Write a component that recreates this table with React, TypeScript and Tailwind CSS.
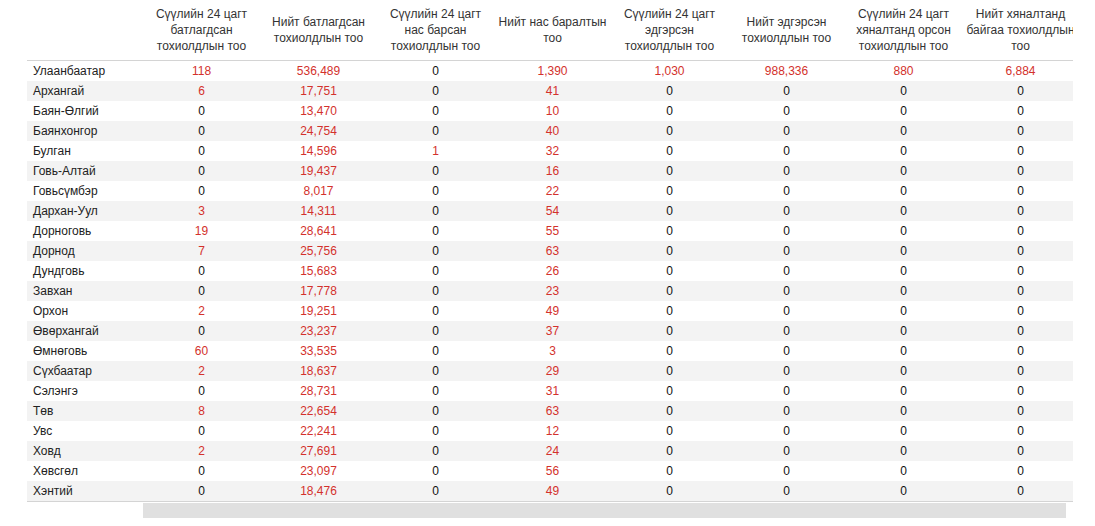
import React from "react";

const headers = [
  "Сүүлийн 24 цагт батлагдсан тохиолдлын тоо",
  "Нийт батлагдсан тохиолдлын тоо",
  "Сүүлийн 24 цагт нас барсан тохиолдлын тоо",
  "Нийт нас баралтын тоо",
  "Сүүлийн 24 цагт эдгэрсэн тохиолдлын тоо",
  "Нийт эдгэрсэн тохиолдлын тоо",
  "Сүүлийн 24 цагт хяналтанд орсон тохиолдлын тоо",
  "Нийт хяналтанд байгаа тохиолдлын тоо",
];

const rows: [string, string[]][] = [
  ["Улаанбаатар", ["118", "536,489", "0", "1,390", "1,030", "988,336", "880", "6,884"]],
  ["Архангай", ["6", "17,751", "0", "41", "0", "0", "0", "0"]],
  ["Баян-Өлгий", ["0", "13,470", "0", "10", "0", "0", "0", "0"]],
  ["Баянхонгор", ["0", "24,754", "0", "40", "0", "0", "0", "0"]],
  ["Булган", ["0", "14,596", "1", "32", "0", "0", "0", "0"]],
  ["Говь-Алтай", ["0", "19,437", "0", "16", "0", "0", "0", "0"]],
  ["Говьсүмбэр", ["0", "8,017", "0", "22", "0", "0", "0", "0"]],
  ["Дархан-Уул", ["3", "14,311", "0", "54", "0", "0", "0", "0"]],
  ["Дорноговь", ["19", "28,641", "0", "55", "0", "0", "0", "0"]],
  ["Дорнод", ["7", "25,756", "0", "63", "0", "0", "0", "0"]],
  ["Дундговь", ["0", "15,683", "0", "26", "0", "0", "0", "0"]],
  ["Завхан", ["0", "17,778", "0", "23", "0", "0", "0", "0"]],
  ["Орхон", ["2", "19,251", "0", "49", "0", "0", "0", "0"]],
  ["Өвөрхангай", ["0", "23,237", "0", "37", "0", "0", "0", "0"]],
  ["Өмнөговь", ["60", "33,535", "0", "3", "0", "0", "0", "0"]],
  ["Сүхбаатар", ["2", "18,637", "0", "29", "0", "0", "0", "0"]],
  ["Сэлэнгэ", ["0", "28,731", "0", "31", "0", "0", "0", "0"]],
  ["Төв", ["8", "22,654", "0", "63", "0", "0", "0", "0"]],
  ["Увс", ["0", "22,241", "0", "12", "0", "0", "0", "0"]],
  ["Ховд", ["2", "27,691", "0", "24", "0", "0", "0", "0"]],
  ["Хөвсгөл", ["0", "23,097", "0", "56", "0", "0", "0", "0"]],
  ["Хэнтий", ["0", "18,476", "0", "49", "0", "0", "0", "0"]],
];

export default function App() {
  return (
    <div
      className="w-[1095px] h-[526px] bg-white overflow-hidden"
      style={{ fontFamily: '"Liberation Sans", Arial, sans-serif' }}
    >
      <div className="ml-[27px] w-[1046px] overflow-hidden">
        <table className="table-fixed border-collapse w-[1052px] text-[12px]">
          <colgroup>
            <col className="w-[116px]" />
            {headers.map((_, i) => (
              <col key={i} className="w-[117px]" />
            ))}
          </colgroup>
          <thead>
            <tr className="border-b border-[#d4d4d4]">
              <th className="h-[60px]"></th>
              {headers.map((h, i) => (
                <th
                  key={i}
                  className="px-[2px] align-middle text-center font-normal leading-[16px] text-[#333]"
                >
                  {h}
                </th>
              ))}
            </tr>
          </thead>
          <tbody>
            {rows.map(([name, vals], r) => (
              <tr
                key={name}
                className={
                  (r % 2 === 1 ? "bg-[#f3f3f3] " : "bg-white ") +
                  (r === rows.length - 1 ? "border-b border-[#d4d4d4]" : "")
                }
              >
                <td className="h-[20px] pl-[6px] text-left text-[#222] leading-[20px] p-0">{name}</td>
                {vals.map((v, i) => (
                  <td
                    key={i}
                    className={
                      "h-[20px] p-0 text-center leading-[20px] " +
                      (v === "0" ? "text-[#111]" : "text-[#d3312c]")
                    }
                  >
                    {v}
                  </td>
                ))}
              </tr>
            ))}
          </tbody>
        </table>
        <div className="ml-[116px] mt-[1px] w-[923px] h-[15px] bg-[#e0e0e0]"></div>
      </div>
    </div>
  );
}
